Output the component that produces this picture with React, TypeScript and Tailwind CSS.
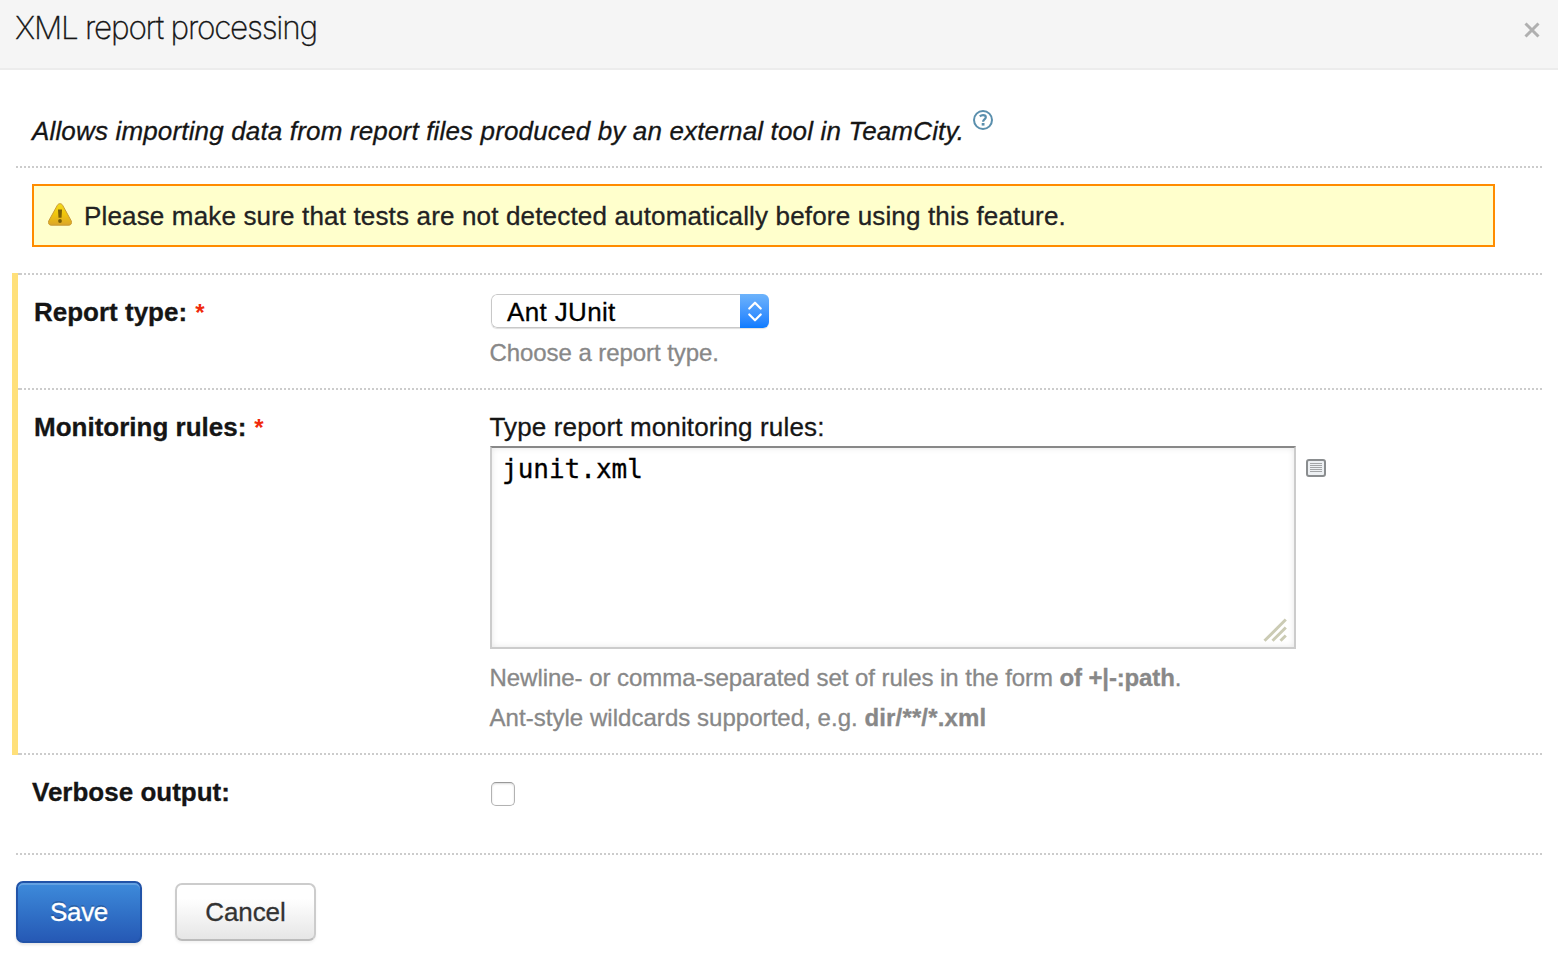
import type { ReactNode } from "react";

function Divider({ className = "" }: { className?: string }) {
  return (
    <div
      className={`h-[2px] bg-[repeating-linear-gradient(90deg,#cccccc_0px,#cccccc_2px,transparent_2px,transparent_4px)] ${className}`}
    />
  );
}

function Label({ children, required }: { children: ReactNode; required?: boolean }) {
  return (
    <div className="w-[456px] shrink-0 leading-[30px] font-bold whitespace-nowrap">
      <span>{children}</span>
      {required && <span className="ml-[8px] text-[24px] text-[#f02a0c] [-webkit-text-stroke:0px]">*</span>}
    </div>
  );
}

function HelpIcon() {
  return (
    <svg className="ml-[9px] mt-[3px] shrink-0" width="20" height="20" viewBox="0 0 20 20" fill="none" stroke="#5a8fad">
      <circle cx="10" cy="10" r="9" strokeWidth="2" />
      <path d="M6.800 6.400C7.700 5.500 8.800 5.100 10 5.100c1.800 0 2.800.9 2.800 2.200 0 2.100-2.700 2.200-2.700 4.400" strokeWidth="2.200" />
      <path d="M8.700 14.300h2.800" strokeWidth="2.600" />
    </svg>
  );
}

function WarningIcon() {
  return (
    <svg className="mt-[2px] shrink-0" width="24" height="23" viewBox="0 0 24 23">
      <defs>
        <linearGradient id="warn" x1="0" y1="0" x2="0" y2="1">
          <stop offset="0" stopColor="#f2da1c" />
          <stop offset="0.5" stopColor="#f0c50c" />
          <stop offset="1" stopColor="#dba52c" />
        </linearGradient>
      </defs>
      <path
        d="M9.400 2.200C10.500.2 13.500.2 14.600 2.200L23.200 17.800c1 2.200-.1 4.400-2.300 4.400H3.100c-2.200 0-3.300-2.200-2.300-4.400z"
        fill="url(#warn)"
        stroke="#c99a35"
        strokeWidth="1"
      />
      <path d="M10 6.400h4l-.5 8.300h-3z" fill="#7a5f08" />
      <circle cx="12" cy="18" r="1.900" fill="#7a5f08" />
    </svg>
  );
}

function EditIcon() {
  return (
    <svg className="ml-[10px] mt-[13px] shrink-0" width="20" height="18" viewBox="0 0 20 18" fill="none">
      <rect x="1" y="1" width="18" height="16" rx="2" fill="#edf0f3" stroke="#8a8d8f" strokeWidth="2" />
      <path d="M4 4.500h12M4 6.500h12M4 8.500h12M4 10.500h12M4 12.500h12" stroke="#a3a5a7" />
    </svg>
  );
}

export default function App() {
  return (
    <div className="flex h-[958px] w-[1558px] flex-col overflow-hidden bg-white font-['Liberation_Sans',sans-serif] text-[26px] text-[#151515] [-webkit-text-stroke:0.3px]">
      <header className="flex h-[70px] items-start justify-between border-b-2 border-[#ececec] bg-[#f5f5f5] pl-[15px] pr-[18px]">
        <h1 className="mt-[8px] font-['Inter',sans-serif] text-[31.500px] font-extralight leading-[40px] tracking-[-1.240px] whitespace-nowrap">
          XML report processing
        </h1>
        <svg className="mt-[22px]" width="16" height="16" viewBox="0 0 16 16" stroke="#b0b0b0" strokeWidth="3">
          <path d="M1.500 1.500l13 13M14.500 1.500l-13 13" />
        </svg>
      </header>

      <div className="flex h-[96px] items-start pl-[32px] pt-[37px]">
        <p className="mt-[9px] italic leading-[30px] tracking-[0.160px] whitespace-nowrap">
          Allows importing data from report files produced by an external tool in TeamCity.
        </p>
        <HelpIcon />
      </div>

      <Divider className="mx-[16px]" />
      <div className="h-[105px] pl-[32px] pt-[16px]">
        <div className="flex h-[63px] w-[1463px] border-2 border-[#ff8c00] bg-[#ffffcc] pl-[14px] pt-[15px]">
          <WarningIcon />
          <span className="ml-[12px] leading-[30px] tracking-[0.160px] text-[#222222] whitespace-nowrap">
            Please make sure that tests are not detected automatically before using this feature.
          </span>
        </div>
      </div>

      <section className="mr-[16px] ml-[12px] h-[482px] border-l-[6px] border-[#ffe07a]">
        <Divider className="border-l-2 border-[#cccccc]" />
        <div className="flex h-[113px] pl-[16px] pt-[19px]">
          <div className="pt-[3px]">
            <Label required>Report type:</Label>
          </div>
          <div>
            <div className="ml-px flex h-[34px] w-[278px] overflow-hidden rounded-[6px] shadow-[0_1px_1px_#00000022]">
              <div className="w-[249px] rounded-l-[6px] border border-r-0 border-[#c8c8c8] pl-[15px] pt-[2px] leading-[30px] tracking-[0.350px] text-black">
                Ant JUnit
              </div>
              <div className="flex w-[29px] items-center justify-center bg-linear-to-b from-[#6db3fb] to-[#0a7bff]">
                <svg width="14" height="21" viewBox="0 0 14 21" fill="none" stroke="#fff" strokeWidth="2.200" strokeLinecap="round" strokeLinejoin="round">
                  <path d="M1.300 7.500L7 1.700l5.700 5.800M1.300 13.500L7 19.300l5.700-5.800" />
                </svg>
              </div>
            </div>
            <p className="-ml-[0.500px] mt-[10px] text-[24px] leading-[30px] tracking-[-0.070px] text-[#888888] whitespace-nowrap">
              Choose a report type.
            </p>
          </div>
        </div>
        <Divider className="border-l-2 border-[#cccccc]" />
        <div className="flex h-[363px] pl-[16px] pt-[22px]">
          <Label required>Monitoring rules:</Label>
          <div>
            <p className="-ml-[0.500px] leading-[30px] tracking-[0.140px] whitespace-nowrap">Type report monitoring rules:</p>
            <div className="mt-[4px] flex">
              <div className="flex h-[203px] w-[806px] flex-col justify-between border-2 border-[#cccccc] border-t-[#888888] pl-[10px] pt-[5px] font-['DejaVu_Sans_Mono',monospace] leading-[32px] text-black shadow-[inset_0_0_6px_#0000001a]">
                <span>junit.xml</span>
                <svg className="mr-[7px] mb-[5px] self-end" width="24" height="24" viewBox="0 0 24 24" stroke="#cbcbb4" strokeWidth="3">
                  <path d="M1.500 22.800L22.800 1.500M9.500 22.800l13.300-13.300M17.500 22.800l5.300-5.300" />
                </svg>
              </div>
              <EditIcon />
            </div>
            <div className="-ml-[0.500px] mt-[9px] text-[24px] leading-[40px] text-[#888888] whitespace-nowrap">
              <p>
                <span className="tracking-[-0.040px]">Newline- or comma-separated set of rules in the form </span>
                <b className="tracking-[-0.150px]">of +|-:path</b>.
              </p>
              <p>
                <span className="tracking-[0.040px]">Ant-style wildcards supported, e.g. </span>
                <b className="tracking-[0.150px]">dir/**/*.xml</b>
              </p>
            </div>
          </div>
        </div>
        <Divider className="border-l-2 border-[#cccccc]" />
      </section>

      <div className="flex h-[98px] pl-[32px] pt-[22px]">
        <Label>Verbose output:</Label>
        <div className="mt-[5px] ml-[3px] size-[24px] rounded-[5px] border border-[#b2b2b2] border-t-[#999999] bg-white shadow-[inset_0_1px_2px_#00000026]" />
      </div>
      <Divider className="mx-[16px]" />

      <footer className="flex items-start pl-[16px] pt-[26px]">
        <button className="flex h-[62px] w-[126px] justify-center rounded-[7px] border-2 border-[#2153a8] bg-linear-to-b from-[#3e8bdb] to-[#2659b5] pt-[14px] leading-[30px] tracking-[-0.300px] text-white shadow-[inset_0_2px_0_#ffffff33,0_2px_3px_#0000001a] [text-shadow:0_-2px_0_#00000033]">
          Save
        </button>
        <button className="mt-[2px] ml-[33px] flex h-[58px] w-[141px] justify-center rounded-[7px] border-2 border-[#cccccc] border-b-[#bbbbbb] bg-linear-to-b from-white from-25% to-[#e6e6e6] pt-[12px] leading-[30px] tracking-[-0.100px] text-[#333333] shadow-[0_2px_3px_#0000000d]">
          Cancel
        </button>
      </footer>
    </div>
  );
}
